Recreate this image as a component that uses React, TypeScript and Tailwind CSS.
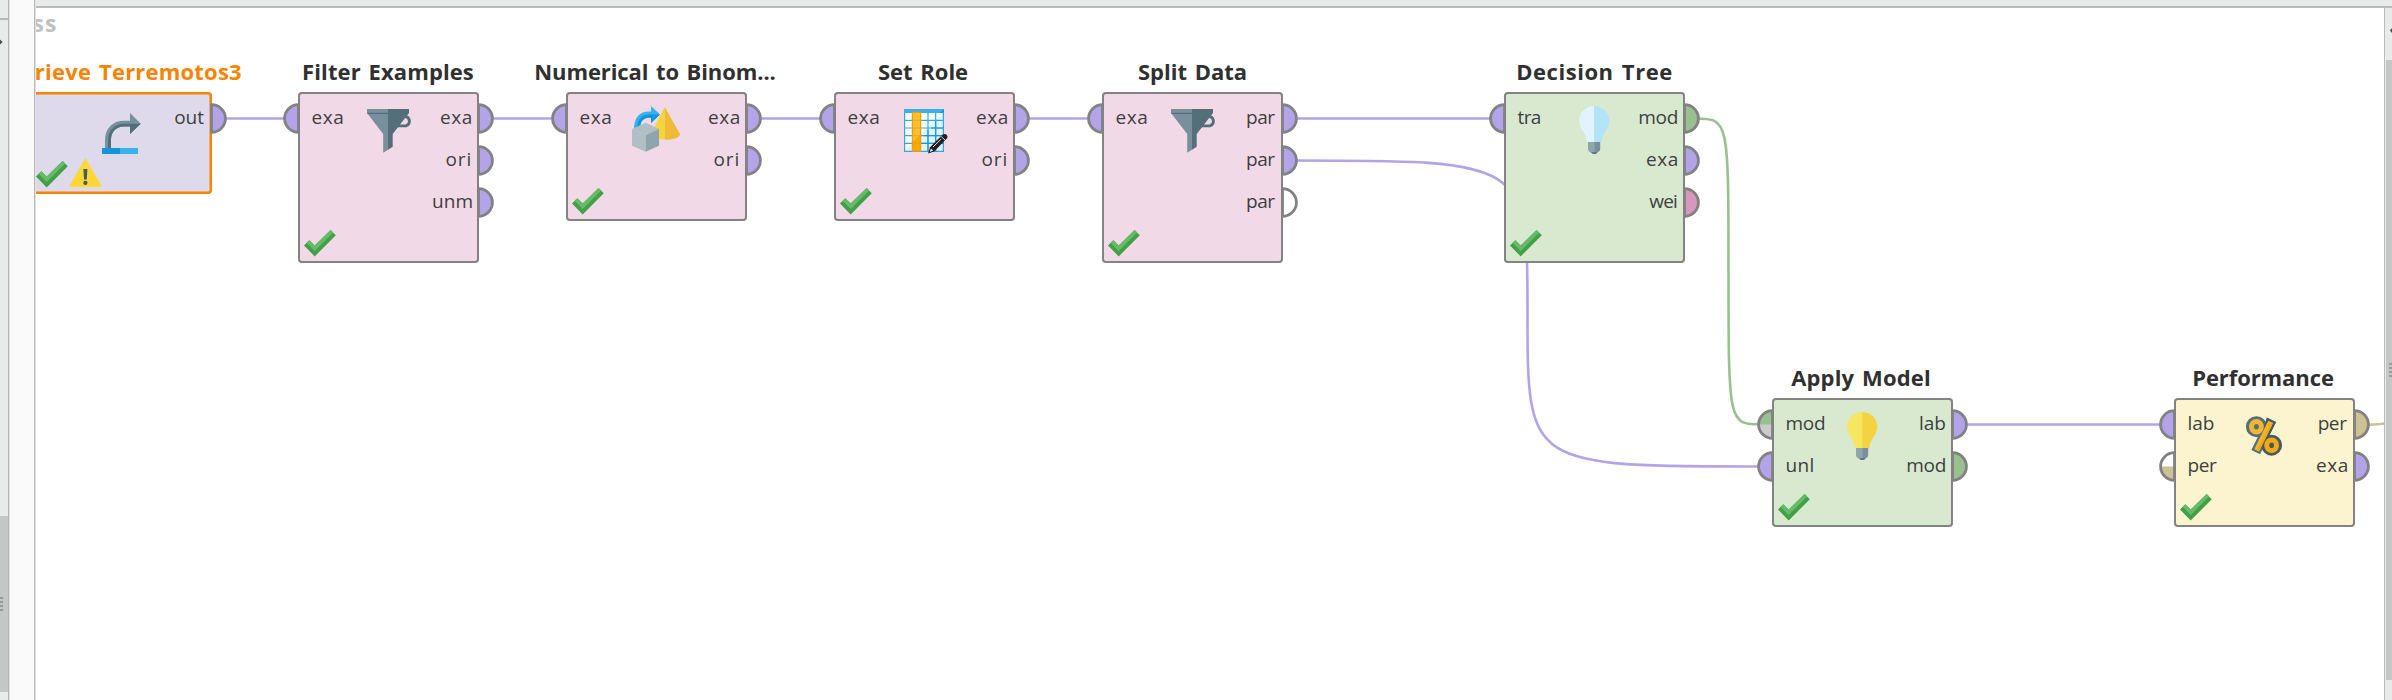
import type { ReactNode } from "react";
import clsx from "clsx";

const VIOLET = "#b3a3e9";
const GREEN = "#99c08f";
const PINK = "#d797bf";
const SAND = "#cbc295";

type Port = { name: string; fill: string; lower?: string };
type Operator = {
  title: string;
  titleClass: string;
  place: string;
  box: string;
  icon: ReactNode;
  inputs: Port[];
  outputs: Port[];
  warning?: boolean;
};

const labelTracking: Record<string, string> = {
  exa: "tracking-[0.6px]",
  ori: "tracking-[0.8px]",
  par: "tracking-[-0.5px]",
  mod: "tracking-[-0.3px]",
  wei: "tracking-[-0.8px]",
  tra: "tracking-[-0.6px]",
  unl: "tracking-[0.3px]",
  per: "tracking-[-0.4px]",
};

const rightPad: Record<string, string> = {
  exa: "pr-[6px]",
  ori: "pr-[7px]",
  par: "pr-[8.5px]",
  per: "pr-[8.5px]",
  mod: "pr-[7px]",
  wei: "pr-[8px]",
  lab: "pr-[7px]",
  unm: "pr-[6px]",
  out: "pr-[8px]",
};

function Check() {
  return (
    <svg className="h-[27px] w-8 shrink-0" viewBox="0 0 32 27">
      <path d="M0 15.4 5.3 10.2 10.7 15.6 26.6 0 31.8 5.2 10.7 26.4Z" fill="#43a047" />
      <path d="M2.6 12.8 5.3 10.2 10.7 15.6 26.6 0 29.2 2.6 10.7 20.9Z" fill="#66bb6a" />
    </svg>
  );
}

function Warning() {
  return (
    <svg className="h-[30px] w-[33px] shrink-0" viewBox="0 0 33 30">
      <path d="M16.4.8 32.4 28.6H.4Z" fill="#fdd835" stroke="#fdd835" strokeWidth=".8" strokeLinejoin="round" />
      <path d="M14.4 11H18.4L17.8 21.4H15Z" fill="#455a64" />
      <circle cx="16.4" cy="24.9" r="2.1" fill="#455a64" />
    </svg>
  );
}

function RetrieveIcon() {
  return (
    <svg className="size-12" viewBox="0 0 48 48">
      <path d="M8 42V34C8 22 16 14.7 27 14.7H33V7L43.8 17.7 33 28V20.4H27C19 20.4 14 26 14 34V42Z" fill="#78909c" />
      <path d="M11 42V34C11 24 18 17.7 27 17.7H43.8L33 28V20.4H27C19 20.4 14 26 14 34V42Z" fill="#546e7a" />
      <path d="M5 42H23V48H5Z" fill="#1296db" />
      <path d="M23 42H41V48H23Z" fill="#36b3ef" />
    </svg>
  );
}

function FunnelIcon() {
  return (
    <svg className="size-12" viewBox="0 0 48 48">
      <path d="M40 10.6H42A4.8 4.8 0 0 1 42 19.8H33" fill="none" stroke="#546e7a" strokeWidth="2.8" />
      <path d="M3 3H24V43.8L19.2 46.8V28L3 7Z" fill="#78909c" />
      <path d="M24 3H45V7L28.7 28V40.8L24 43.8Z" fill="#546e7a" />
      <path d="M3.4 7.4H24" stroke="#546e7a" strokeWidth="1.2" />
    </svg>
  );
}

function ConvertIcon() {
  return (
    <svg className="size-12" viewBox="0 0 48 48">
      <path d="M32.7.7 33 33.6C27 33.6 20 32 19 28Z" fill="#f4d53b" />
      <path d="M32.7.7 48 28.3C47.6 32 41 33.8 33 33.8Z" fill="#f0bb36" />
      <path d="M2 23C2 11 8 5.4 17 5.4H19V0L28 8.6 19 17V11.6C12 11.6 8.6 14 8 22Z" fill="#36b3ef" />
      <path d="M5 23C5 13 10 8.6 17 8.6H28L19 17V11.8C12 11.6 8.6 14 8 22Z" fill="#1296db" />
      <path d="M13.7 16.8 27 23 13.7 29 0 23Z" fill="#b0bec5" />
      <path d="M0 23 13.7 29V45.7L0 39.8Z" fill="#b0bec5" />
      <path d="M27 23 13.7 29V45.7L27 39.8Z" fill="#90a4ae" />
    </svg>
  );
}

function TableIcon() {
  return (
    <svg className="size-12" viewBox="0 0 48 48">
      <path d="M4 3H44V46H4Z" fill="#fff" />
      <path d="M44 5V46H4Z" fill="#e1f3fd" />
      <path d="M4 3H44V7H4Z" fill="#36b3ef" />
      <path d="M44 3V7H40Z" fill="#1296db" />
      <path d="M4.6 6V45.4M28 6V45.4M35.7 6V45.4M43.4 6V45.4M4 14.3H44M4 22H44M4 29.7H44M4 37.3H44M4 45.4H44" stroke="#29abe6" strokeWidth="1.2" />
      <path d="M28 24V45.4M35.7 15V45.4M24 29.7H44M17 37.3H44M31 22H44" stroke="#1296db" strokeWidth="1" />
      <path d="M12.4 6.4H20.6V45.2H12.4Z" fill="#f7c22f" />
      <path d="M20.6 28V45.2H12.4V36.5Z" fill="#f5a90c" />
      <path d="M12.4 6.4H20.6V45.2H12.4Z" fill="none" stroke="#f9980b" strokeWidth="1.3" />
      <path d="M12.4 14.3H20.6M12.4 22H20.6M12.4 29.7H20.6M12.4 37.3H20.6" stroke="#f9980b" strokeWidth=".7" />
      <path d="M28 47.6 30 41.2 42.8 28.6Q44.8 27.2 46.6 28.8 48.2 30.6 46.8 32.6L34.2 45.4Z" fill="#231f20" />
      <path d="M29.6 46 31 42.4 33.2 44.6Z" fill="#f3dfe8" />
      <path d="M33 41 41 33.2M41.2 30.4 45 34.2" stroke="#f3dfe8" strokeWidth="1" />
    </svg>
  );
}

function BulbIcon({ light, dark }: { light: string; dark: string }) {
  return (
    <svg className="size-12" viewBox="0 0 48 48">
      <path d="M24.2 0C15.8 0 9 6.6 9 14.8 9 23 16 26 17 36H24.2Z" fill={light} />
      <path d="M24.2 0C32.6 0 39.4 6.6 39.4 14.8 39.4 23 32.4 26 31.4 36H24.2Z" fill={dark} />
      <path d="M18 36H24.2V48Q22 48 21 46.4 18 45.6 18 43Z" fill="#90a4ae" />
      <path d="M24.2 36H30.2V43Q30.2 45.6 27.4 46.4 26.4 48 24.2 48Z" fill="#78909c" />
      <path d="M21 46.2H27.6Q26.6 48 24.2 48 22 48 21 46.2Z" fill="#546e7a" />
    </svg>
  );
}

function PercentIcon() {
  return (
    <svg className="size-12" viewBox="0 0 48 48">
      <g fill="#546e7a" stroke="#546e7a" strokeWidth="5.4">
        <ellipse cx="16.4" cy="14.7" rx="7.8" ry="7.8" />
        <path d="M28.6 9.4 32.4 11.2 18.8 38.6 15 36.8Z" />
      </g>
      <g fill="#455a64" stroke="#455a64" strokeWidth="5.4">
        <ellipse cx="31.6" cy="33.2" rx="7.8" ry="7.8" />
        <path d="M28.6 9.4 32.4 11.2 24 28Z" />
      </g>
      <path d="M28.3 8.8 33 11 19 39.4 14.3 37.2Z" fill="#f2b632" />
      <path d="M30.6 10 33 11 19 39.4 16.6 38.3Z" fill="#f5a90c" />
      <ellipse cx="16.4" cy="14.7" rx="4.9" ry="5.3" fill="#546e7a" stroke="#f2b632" strokeWidth="5" />
      <ellipse cx="31.6" cy="33.2" rx="4.9" ry="5.3" fill="#455a64" stroke="#f5a90c" strokeWidth="5" />
    </svg>
  );
}

function PortMark({ port, side }: { port: Port; side: "left" | "right" }) {
  return (
    <svg
      className={clsx("absolute top-[7px] h-[31px] w-[17px]", side === "left" ? "-left-[15px]" : "-right-[15px] -scale-x-100")}
      viewBox="0 0 17 31"
    >
      <path d="M15.5 1.6A13.9 13.9 0 0 0 15.5 29.4Z" fill={port.fill} />
      {port.lower && <path d="M1.6 15.5A13.9 13.9 0 0 0 15.5 29.4V15.5Z" fill={port.lower} />}
      <path d="M15.5 1.6A13.9 13.9 0 0 0 15.5 29.4Z" fill="none" stroke="#828282" strokeWidth="2.8" />
    </svg>
  );
}

function PortColumn({ ports, side }: { ports: Port[]; side: "left" | "right" }) {
  return (
    <div className="flex flex-1 flex-col">
      {ports.map((port, i) => (
        <div
          key={i}
          className={clsx(
            "relative h-[42px] text-[19px] leading-[42px] text-[#3f3f3f]",
            labelTracking[port.name],
            side === "left" ? "pl-[13.5px] text-left" : clsx("text-right", rightPad[port.name]),
          )}
        >
          {port.name}
          <PortMark port={port} side={side} />
        </div>
      ))}
    </div>
  );
}

function OperatorNode({ op }: { op: Operator }) {
  return (
    <div className={clsx("absolute w-[181px]", op.place)}>
      <div className={clsx("flex h-[36px] justify-center text-[22px] leading-[30px] font-bold whitespace-nowrap [word-spacing:2px]", op.titleClass)}>
        {op.title}
      </div>
      <div className={clsx("relative rounded-[4px]", op.box)}>
        <div className="absolute top-[14px] left-[66px]">{op.icon}</div>
        <div className={clsx("absolute bottom-[6px] flex items-end gap-[1px]", op.warning ? "left-[5px]" : "left-[6px]")}>
          <Check />
          {op.warning && <Warning />}
        </div>
        <div className="relative flex pt-1">
          <PortColumn ports={op.inputs} side="left" />
          <PortColumn ports={op.outputs} side="right" />
        </div>
      </div>
    </div>
  );
}

const PINK_BOX = "bg-[#f1d9e7] shadow-[inset_0_0_0_2px_#848284]";
const GREEN_BOX = "bg-[#d8e9cf] shadow-[inset_0_0_0_2px_#848284]";

const exa: Port = { name: "exa", fill: VIOLET };
const ori: Port = { name: "ori", fill: VIOLET };

const operators: Operator[] = [
  {
    title: "Retrieve Terremotos3",
    titleClass: "text-[#f58400] tracking-[0.2px] -ml-[4px]",
    place: "left-[-5px] top-[48px]",
    box: "h-[102px] bg-[#dedaeb] shadow-[inset_0_0_0_2.5px_#f58400]",
    icon: <RetrieveIcon />,
    inputs: [],
    outputs: [{ name: "out", fill: VIOLET }],
    warning: true,
  },
  {
    title: "Filter Examples",
    titleClass: "text-[#303030] tracking-[0.1px] -ml-px",
    place: "left-[262px] top-[48px]",
    box: clsx("h-[171px]", PINK_BOX),
    icon: <FunnelIcon />,
    inputs: [exa],
    outputs: [exa, ori, { name: "unm", fill: VIOLET }],
  },
  {
    title: "Numerical to Binom...",
    titleClass: "text-[#303030] tracking-[-0.1px] -ml-[3px]",
    place: "left-[530px] top-[48px]",
    box: clsx("h-[129px]", PINK_BOX),
    icon: <ConvertIcon />,
    inputs: [exa],
    outputs: [exa, ori],
  },
  {
    title: "Set Role",
    titleClass: "text-[#303030] -ml-[3px]",
    place: "left-[798px] top-[48px]",
    box: clsx("h-[129px]", PINK_BOX),
    icon: <TableIcon />,
    inputs: [exa],
    outputs: [exa, ori],
  },
  {
    title: "Split Data",
    titleClass: "text-[#303030]",
    place: "left-[1066px] top-[48px]",
    box: clsx("h-[171px]", PINK_BOX),
    icon: <FunnelIcon />,
    inputs: [exa],
    outputs: [
      { name: "par", fill: VIOLET },
      { name: "par", fill: VIOLET },
      { name: "par", fill: "#ffffff" },
    ],
  },
  {
    title: "Decision Tree",
    titleClass: "text-[#303030] tracking-[0.54px]",
    place: "left-[1468px] top-[48px]",
    box: clsx("h-[171px]", GREEN_BOX),
    icon: <BulbIcon light="#e1f3fd" dark="#b3e3f8" />,
    inputs: [{ name: "tra", fill: VIOLET }],
    outputs: [{ name: "mod", fill: GREEN }, exa, { name: "wei", fill: PINK }],
  },
  {
    title: "Apply Model",
    titleClass: "text-[#303030] tracking-[0.14px] -ml-[3px]",
    place: "left-[1736px] top-[354px]",
    box: clsx("h-[129px]", GREEN_BOX),
    icon: <BulbIcon light="#f6e85e" dark="#f3d340" />,
    inputs: [
      { name: "mod", fill: GREEN, lower: "#cccccc" },
      { name: "unl", fill: VIOLET },
    ],
    outputs: [
      { name: "lab", fill: VIOLET },
      { name: "mod", fill: GREEN },
    ],
  },
  {
    title: "Performance",
    titleClass: "text-[#303030] tracking-[-0.09px] -ml-[3px]",
    place: "left-[2138px] top-[354px]",
    box: "h-[129px] bg-[#fcf4cf] shadow-[inset_0_0_0_2px_#848284]",
    icon: <PercentIcon />,
    inputs: [
      { name: "lab", fill: VIOLET },
      { name: "per", fill: "#ffffff", lower: SAND },
    ],
    outputs: [{ name: "per", fill: SAND }, exa],
  },
];

function Wires() {
  return (
    <svg className="absolute inset-0 h-[692px] w-[2348px]" viewBox="36 8 2348 692" fill="none" strokeWidth="2.6">
      <path d="M220 118.5H290M488 118.5H560M756 118.5H828M1024 118.5H1096M1292 118.5H1498M1962 424.5H2168" stroke={VIOLET} />
      <path d="M1293 160.5C1527.5 160.5 1527.5 160.5 1527.5 313.5 1527.5 466.5 1527.5 466.5 1762 466.5" stroke={VIOLET} />
      <path d="M1695 118.5C1728.5 118.5 1728.5 118.5 1728.5 271.5 1728.5 424.5 1728.5 424.5 1762 424.5" stroke={GREEN} />
      <path d="M2365 424.5Q2379 425 2386 423" stroke={SAND} />
    </svg>
  );
}

function Grip() {
  return (
    <div className="flex w-[3px] flex-col gap-[2px]">
      {[0, 1, 2, 3].map((n) => (
        <span key={n} className="h-[2px] bg-[#989a99]" />
      ))}
    </div>
  );
}

function Arrow() {
  return (
    <svg className="h-[6px] w-[3px]" viewBox="0 0 3 6">
      <path d="M0 .5 2.6 3 0 5.5Z" fill="#4a4a4a" />
    </svg>
  );
}

export default function App() {
  return (
    <div className="flex h-[700px] w-[2392px] overflow-hidden bg-white font-['Open_Sans',sans-serif]">
      <aside className="flex w-[10px] flex-col border-r border-[#e0e0e0] bg-[#e8ebe9]">
        <div className="flex h-full flex-col border-r border-[#b5b5b5]">
          <div className="h-[20px] border-b-2 border-[#b9bbba]" />
          <div className="h-[496px] pt-[19px]">
            <Arrow />
          </div>
          <div className="flex h-[176px] items-start bg-[#c5c7c6] pt-[81px]">
            <Grip />
          </div>
        </div>
      </aside>
      <div className="w-[26px] border-r border-[#e2e2e2] bg-[#fafafa]">
        <div className="h-full border-r border-[#b9b9b9]" />
      </div>
      <div className="flex flex-1 flex-col">
        <div className="h-2 border-b-2 border-[#b9bbba] bg-[#e8ebe9]" />
        <div className="flex h-[692px]">
          <main className="relative w-[2348px] overflow-hidden bg-white">
            <div className="absolute top-0 right-[2326.5px] text-[23px] leading-[31px] font-bold tracking-[1px] text-[#c0c0c0]">Process</div>
            <Wires />
            {operators.map((op) => (
              <OperatorNode key={op.title} op={op} />
            ))}
          </main>
          <div className="flex w-2 flex-col border-l border-[#b9bbba] bg-[#e8ebe9] pl-px">
            <div className="flex h-[52px] justify-end pt-[20px]">
              <svg className="h-[5px] w-[2px]" viewBox="0 0 2 5">
                <path d="M2 0V5L0 2.5Z" fill="#4a4a4a" />
              </svg>
            </div>
            <div className="flex h-[620px] items-start justify-end bg-[#c5c7c6] pt-[303px]">
              <Grip />
            </div>
          </div>
        </div>
      </div>
    </div>
  );
}
